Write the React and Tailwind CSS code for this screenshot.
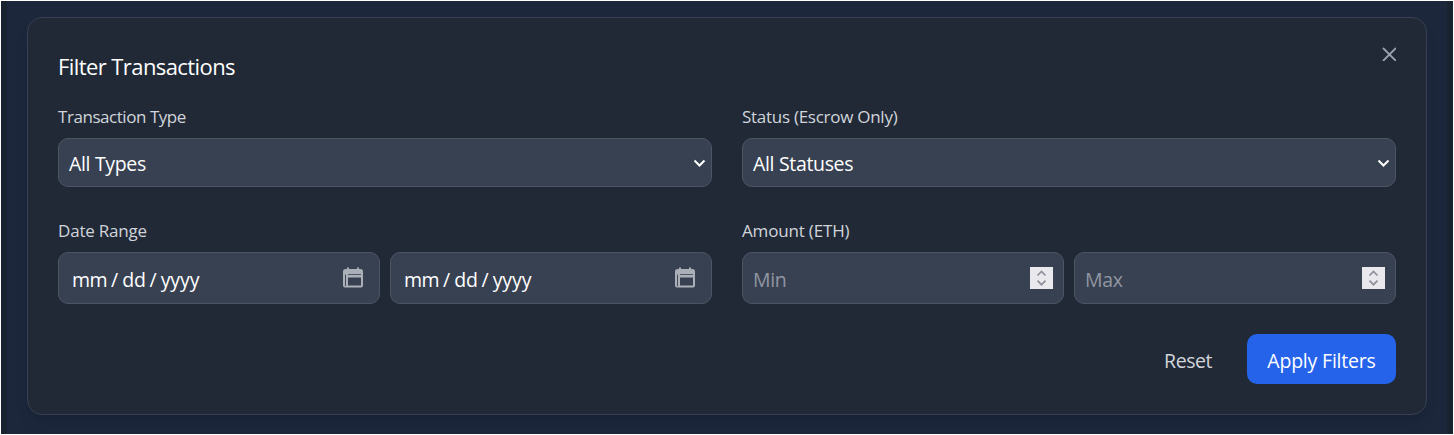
import React from "react";

function Label({ children, className = "" }) {
  return (
    <div className="mb-2 flex h-[26px] items-center whitespace-nowrap text-[17px] text-[#d1d5db]">
      <span className={className}>{children}</span>
    </div>
  );
}

function SelectBox({ children }) {
  return (
    <button className="flex h-[49px] w-full items-center justify-between rounded-[10px] border border-[#4b5563] bg-[#384151] pl-2.5 pr-[5px] text-[19.5px] text-white">
      <span className="pt-[3px] tracking-[-0.33px]">{children}</span>
      <svg width="14" height="10" viewBox="0 0 14 10" fill="none" stroke="white" strokeWidth="2">
        <path d="M2.500 2.500 7.500 7.500 12.500 2.500" />
      </svg>
    </button>
  );
}

function CalendarIcon() {
  return (
    <svg width="22" height="22" viewBox="0 0 22 22">
      <path d="M5 .5h2v1.500h8V.5h2V2h1.500A2.500 2.500 0 0 1 21 4.500v14a2 2 0 0 1-2 2H3a2 2 0 0 1-2-2v-14A2.500 2.500 0 0 1 3.500 2H5z" fill="#abafb8" />
      <path d="M3.500 7.500v11.500" stroke="#384151" strokeWidth=".9" />
      <path d="M6 7.500h13" stroke="#384151" strokeWidth=".8" />
      <path d="M6 10.500h13v8H6z" fill="#384151" />
    </svg>
  );
}

function DateBox() {
  return (
    <div className="flex h-[52px] flex-1 items-center justify-between rounded-[10px] border border-[#4b5563] bg-[#384151] pl-[13px] pr-[15px] text-[19.5px] text-white">
      <span className="flex gap-1 pt-1">
        <span className="tracking-[-0.5px]">mm</span>
        <span>/</span>
        <span className="tracking-[-0.3px]">dd</span>
        <span>/</span>
        <span className="tracking-[-0.1px]">yyyy</span>
      </span>
      <span className="pb-px"><CalendarIcon /></span>
    </div>
  );
}

function AmountBox({ children }) {
  return (
    <div className="flex h-[52px] flex-1 items-center justify-between rounded-[10px] border border-[#4b5563] bg-[#384151] px-2.5 text-[19.5px] text-[#9096a3]">
      <span className="pt-1 tracking-[-0.3px]">{children}</span>
      <span className="mb-px flex h-[22px] w-[23px] items-center justify-center bg-[#e9e9ed]">
        <svg width="23" height="22" viewBox="0 0 23 22" fill="none" stroke="#8f8f9d" strokeWidth="1.7">
          <path d="m7.500 8.500 4-4 4 4M7.500 13.700l4 4 4-4" />
        </svg>
      </span>
    </div>
  );
}

export default function App() {
  return (
    <div className="h-[435px] w-full border border-white bg-[#18232f] px-1.5 font-['Open_Sans','Noto_Sans',sans-serif]">
      <div className="h-full overflow-hidden bg-[#1c273c] px-5 pt-4">
        <section className="relative h-[398px] rounded-[15px] border border-[#374151] bg-[#212936] p-[30px] shadow-lg">
          <button aria-label="Close" className="absolute right-[30px] top-[29px]">
            <svg width="14" height="14" viewBox="0 0 14 14" fill="none" stroke="#9ca3af" strokeWidth="1.8" strokeLinecap="round">
              <path d="m1.500 1.500 12 12M13.500 1.500 1.500 13.500" />
            </svg>
          </button>
          <h3 className="mb-[18px] flex h-[38px] items-center whitespace-nowrap text-[22px] font-medium text-white">
            <span className="pb-0.5 tracking-[-0.58px]">Filter Transactions</span>
          </h3>
          <div className="grid grid-cols-2 gap-x-[30px] gap-y-[31px]">
            <div>
              <Label className="tracking-[-0.45px]">Transaction Type</Label>
              <SelectBox>All Types</SelectBox>
            </div>
            <div>
              <Label className="tracking-[-0.27px]">Status (Escrow Only)</Label>
              <SelectBox>All Statuses</SelectBox>
            </div>
            <div>
              <Label className="tracking-[-0.2px]">Date Range</Label>
              <div className="flex gap-2.5">
                <DateBox />
                <DateBox />
              </div>
            </div>
            <div>
              <Label className="tracking-[-0.17px]">Amount (ETH)</Label>
              <div className="flex gap-2.5">
                <AmountBox>Min</AmountBox>
                <AmountBox>Max</AmountBox>
              </div>
            </div>
          </div>
          <div className="mt-[30px] flex justify-end text-[19.5px]">
            <button className="mr-[35px] h-[50px] pt-1 tracking-[-0.45px] text-[#d1d5db]">Reset</button>
            <button className="h-[50px] w-[149px] whitespace-nowrap rounded-[10px] bg-[#2563eb] pt-1 tracking-[-0.2px] text-white">Apply Filters</button>
          </div>
        </section>
      </div>
    </div>
  );
}
